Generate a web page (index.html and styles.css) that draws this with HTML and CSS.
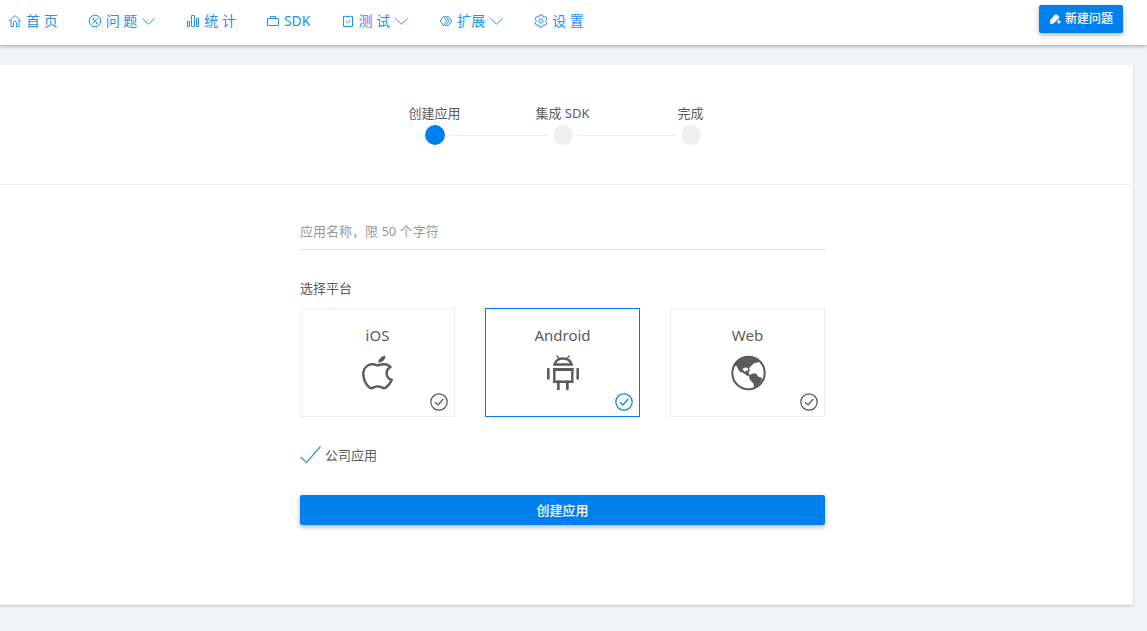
FILE: index.html
```html
<!DOCTYPE html>
<html lang="zh-CN">
<head>
<meta charset="utf-8">
<meta name="viewport" content="width=device-width, initial-scale=1">
<title>创建应用</title>
<link rel="stylesheet" href="styles.css">
</head>
<body>
<header class="topbar">
  <nav class="nav">
    <a class="nav-link" href="#home"><svg class="icon" viewBox="0 0 14 14"><path d="M1 7.5 7 1.5l6 6M3 6v6.5h2.5V8.800a1.500 1.500 0 0 1 3 0v3.700H11V6"/></svg>首 页</a>
    <a class="nav-link" href="#issues"><svg class="icon" viewBox="0 0 14 14"><circle cx="7" cy="7" r="5.8"/><path d="m4.200 4.700 5.300 4.800M9.500 4.200 4.700 9.500M4.800 4.200h2M8 9.800h1.500"/></svg>问 题<svg class="icon chevron" viewBox="0 0 15 14"><path d="m1.500 4.300 6 6 6-6"/></svg></a>
    <a class="nav-link" href="#stats"><svg class="icon" viewBox="0 0 14 14"><path d="M1.500 7.500h2v5h-2zM5.500 1.500h3v11h-3zM10.500 4.500h2v8h-2z"/></svg>统 计</a>
    <a class="nav-link" href="#sdk"><svg class="icon" viewBox="0 0 14 14"><path d="M1.500 4.500h11v7h-11zM4.500 4.500v-2h5v2"/></svg>SDK</a>
    <a class="nav-link" href="#test"><svg class="icon" viewBox="0 0 14 14"><path d="M4 2.500H2.500v10h9v-10H10M5 1.500v2M9 1.500v2M5 2.500h4M4.700 7.200l1.800 1.600L9.500 6"/></svg>测 试<svg class="icon chevron" viewBox="0 0 15 14"><path d="m1.500 4.300 6 6 6-6"/></svg></a>
    <a class="nav-link" href="#extensions"><svg class="icon" viewBox="0 0 14 14"><path d="M4.500 2.500 1.300 7l3.200 4.500L7.800 7zM5.500 2.500h1.500L10.200 7 7 11.500H5.500M8 2.500h1.500L12.700 7l-3.200 4.500H8"/></svg>扩展<svg class="icon chevron" viewBox="0 0 15 14"><path d="m1.500 4.300 6 6 6-6"/></svg></a>
    <a class="nav-link" href="#settings"><svg class="icon" viewBox="0 0 14 14"><path d="M5.500 1h3l.4 1.600 1.100.6 1.500-.5 1.500 2.500L11.900 6.300v1.400L13 8.800l-1.500 2.500-1.500-.5-1.100.6L8.500 13h-3l-.4-1.600-1.100-.6-1.500.5L1 8.800l1.100-1.100V6.300L1 5.200l1.500-2.500 1.500.5 1.100-.6z"/><circle cx="7" cy="7" r="2.100"/></svg>设 置</a>
  </nav>
  <button class="btn btn-new" type="button"><svg class="btn-icon" viewBox="0 0 12 12"><path d="M1 11V7.500L5.500 2Q7 .7 8.500 2L10 3.500q.7 1-.3 2L4.500 10.500z"/><path d="M8 8.200h1.200V7h1.300v1.200h1.300v1.300h-1.300v1.300H9.200V9.500H8z"/></svg>新建问题</button>
</header>

<main class="page">
  <section class="panel">
    <ol class="steps">
      <li class="step step-active"><span class="step-label">创建应用</span><span class="step-track"><i class="dot"></i></span></li>
      <li class="step"><span class="step-label">集成 SDK</span><span class="step-track"><i class="dot"></i></span></li>
      <li class="step"><span class="step-label">完成</span><span class="step-track"><i class="dot"></i></span></li>
    </ol>
    <form class="form">
      <input class="name-input" type="text" placeholder="应用名称，限 50 个字符" aria-label="应用名称" maxlength="50">
      <fieldset class="platforms">
        <legend class="platforms-title">选择平台</legend>
        <div class="platform-grid">
          <label class="platform"><input class="hidden-radio" type="radio" name="platform" value="ios"><span>iOS</span>
            <svg class="platform-icon" viewBox="0 0 36 36"><path class="outline" d="M17.500 10.500C14 9 11 8.800 8.300 10.300 4 12.500 2.500 17 3.600 22c.8 4.400 3.200 8.500 6.500 11 1.200.6 2.200 0 3.600-.6 2.700-1.400 5.300-1.400 8 0 1.600.8 2.700 1.200 4 .4 2.600-2 4.800-4.600 6-7.800-3-1-5-3.300-5.100-6.500-.1-3 1.300-5 3.700-6.600-2.800-3.200-7-3.300-12.800-1.400z"/><path d="M18.200 7.700C18.200 4.500 21 1.300 25.500.800c.1 3.600-2.800 6.900-7.300 6.900z"/></svg>
            <svg class="platform-check" viewBox="0 0 18 18"><circle cx="9" cy="9" r="8.200"/><path d="m5 9.300 3 2.700 5.300-6"/></svg></label>
          <label class="platform"><input class="hidden-radio" type="radio" name="platform" value="android" checked><span>Android</span>
            <svg class="platform-icon" viewBox="0 0 36 36"><path class="outline" d="M9.500 9.500c1.200-4 4.500-6 8.500-6s7.500 2 8.700 6zM9.300 14.500h18v12.300h-18z"/><path d="M8 13h20.500v3H8zM12 25.500h2.700V35H12zM21 25.500h2.700V35H21zM2 13.500q1.300-1.500 2.600 0v10.500q-1.300 1.500-2.600 0zM31.400 13.500q1.300-1.500 2.600 0v10.500q-1.300 1.500-2.600 0z"/><path class="fine" d="m11.500.5 3 3.500M24.500.5l-3 3.500"/></svg>
            <svg class="platform-check" viewBox="0 0 18 18"><circle cx="9" cy="9" r="8.200"/><path d="m5 9.300 3 2.700 5.300-6"/></svg></label>
          <label class="platform"><input class="hidden-radio" type="radio" name="platform" value="web"><span>Web</span>
            <svg class="platform-icon" viewBox="0 0 36 36"><circle class="globe" cx="18.500" cy="18" r="16.200"/><path d="M3 11.500C6 5 12 1.500 18.500 1.500c4 0 8 1.300 11 4l-1.500 2-3.500.5-3 2.500-2.500 3 1 2.500-1.500.8.500 2 1 1.500-2.500.7-4-3-4-1.500-3-5.500zM19.500 20l4-1.800 3 .8 1.500 2.500 4 1.500c0 3-2.500 7-8 9.500l-.5-4-3-3-1.500-3z"/><path class="sea" d="m12.500 14 2.500-1.500 3 .5v3l-1.500-.8-1.200 1.500-1.300-.5z"/></svg>
            <svg class="platform-check" viewBox="0 0 18 18"><circle cx="9" cy="9" r="8.200"/><path d="m5 9.300 3 2.700 5.300-6"/></svg></label>
        </div>
      </fieldset>
      <label class="company"><input class="company-box" type="checkbox" checked><svg class="company-check" viewBox="0 0 21 20"><path d="m.5 12 6 5.500L20.500 1.500"/></svg><span>公司应用</span></label>
      <button class="btn btn-create" type="submit">创建应用</button>
    </form>
  </section>
</main>
</body>
</html>
```
FILE: styles.css
```css
* { box-sizing: border-box; }
body {
  margin: 0;
  min-height: 100vh;
  background: #f2f3f5;
  color: #5b5b5b;
  font: 13px/20px "Noto Sans", "Noto Sans CJK SC", sans-serif;
  overflow-x: hidden;
}
button, input { font: inherit; }
.topbar {
  position: relative;
  display: flex;
  justify-content: space-between;
  align-items: flex-start;
  height: 45px;
  padding: 5px 24px 0 8px;
  background: #fff;
  box-shadow: 0 1px 4px rgba(0, 0, 0, .35);
}
.nav { display: flex; gap: 30px; padding-top: 5px; }
.nav-link {
  display: flex;
  align-items: center;
  gap: 4px;
  color: #2490ee;
  font-size: 14px;
  line-height: 21px;
  text-decoration: none;
  white-space: nowrap;
}
.icon { width: 14px; height: 14px; fill: none; stroke: currentColor; stroke-width: 1; }
.chevron { width: 15px; }
.btn {
  border: 0;
  border-radius: 2px;
  background: #0080ec;
  color: #fff;
  font-weight: 500;
  box-shadow: 0 2px 5px rgba(0, 0, 0, .3);
  cursor: pointer;
}
.btn-new {
  display: flex;
  align-items: center;
  gap: 4px;
  height: 28px;
  padding: 0 10px;
  font-size: 12px;
}
.btn-icon { width: 12px; height: 12px; fill: currentColor; }
.page { padding: 20px 14px 26px 0; }
.panel {
  margin-left: -8px;
  padding-bottom: 80px;
  background: #fff;
  box-shadow: 0 1px 2px rgba(0, 0, 0, .2);
}
.steps {
  display: flex;
  justify-content: center;
  margin: 0;
  padding: 38px 0 39px;
  border-bottom: 1px solid #eee;
  list-style: none;
}
.step { width: 128px; text-align: center; }
.step-label { display: block; margin-bottom: 2px; }
.step-track { display: flex; align-items: center; gap: 4px; }
.step-track::before, .step-track::after { content: ""; flex: 1; height: 1px; background: #eee; }
.step:first-child .step-track::before, .step:last-child .step-track::after { background: none; }
.dot { width: 20px; height: 20px; border-radius: 50%; background: #efefef; }
.step-active .dot { background: #0080ec; }
.form { width: 100%; max-width: 525px; margin: 0 auto; padding-top: 30px; }
.name-input {
  display: block;
  width: 100%;
  height: 35px;
  padding: 0 0 2px;
  border: 0;
  border-bottom: 1px solid #ddd;
  outline: 0;
  background: none;
  color: #555;
}
.name-input::placeholder { color: #999; opacity: 1; }
.platforms { min-width: 0; margin: 0; padding: 28px 0 0; border: 0; }
.platforms-title { float: left; width: 100%; padding: 0; margin-bottom: 10px; }
.platform-grid { clear: both; display: grid; grid-template-columns: repeat(3, 1fr); gap: 30px; }
.platform {
  position: relative;
  display: flex;
  flex-direction: column;
  align-items: center;
  height: 109px;
  padding-top: 16px;
  border: 1px solid #eee;
  font-size: 15px;
  cursor: pointer;
}
.platform:has(:checked) { border-color: #0080ec; }
.hidden-radio { position: absolute; opacity: 0; margin: 0; }
.platform-icon { width: 36px; height: 36px; margin-top: 10px; fill: #5b5b5b; }
.outline { fill: none; stroke: #5b5b5b; stroke-width: 2.4; }
.fine { fill: none; stroke: #5b5b5b; stroke-width: 1.2; }
.globe { fill: none; stroke: #5b5b5b; stroke-width: 2; }
.sea { fill: #fff; }
.platform-check {
  position: absolute;
  right: 6px;
  bottom: 5px;
  width: 18px;
  height: 18px;
  fill: none;
  stroke: #555;
  stroke-width: 1.2;
}
.platform:has(:checked) .platform-check { stroke: #0080ec; }
.company { display: flex; align-items: center; gap: 4px; width: max-content; margin-top: 28px; cursor: pointer; }
.company-box { position: absolute; opacity: 0; margin: 0; }
.company-check { width: 21px; height: 20px; fill: none; stroke: #26a69a; stroke-width: 1.2; }
.company-box:not(:checked) + .company-check { stroke: #ccc; }
.btn-create { display: block; width: 100%; height: 30px; margin-top: 30px; }
```
